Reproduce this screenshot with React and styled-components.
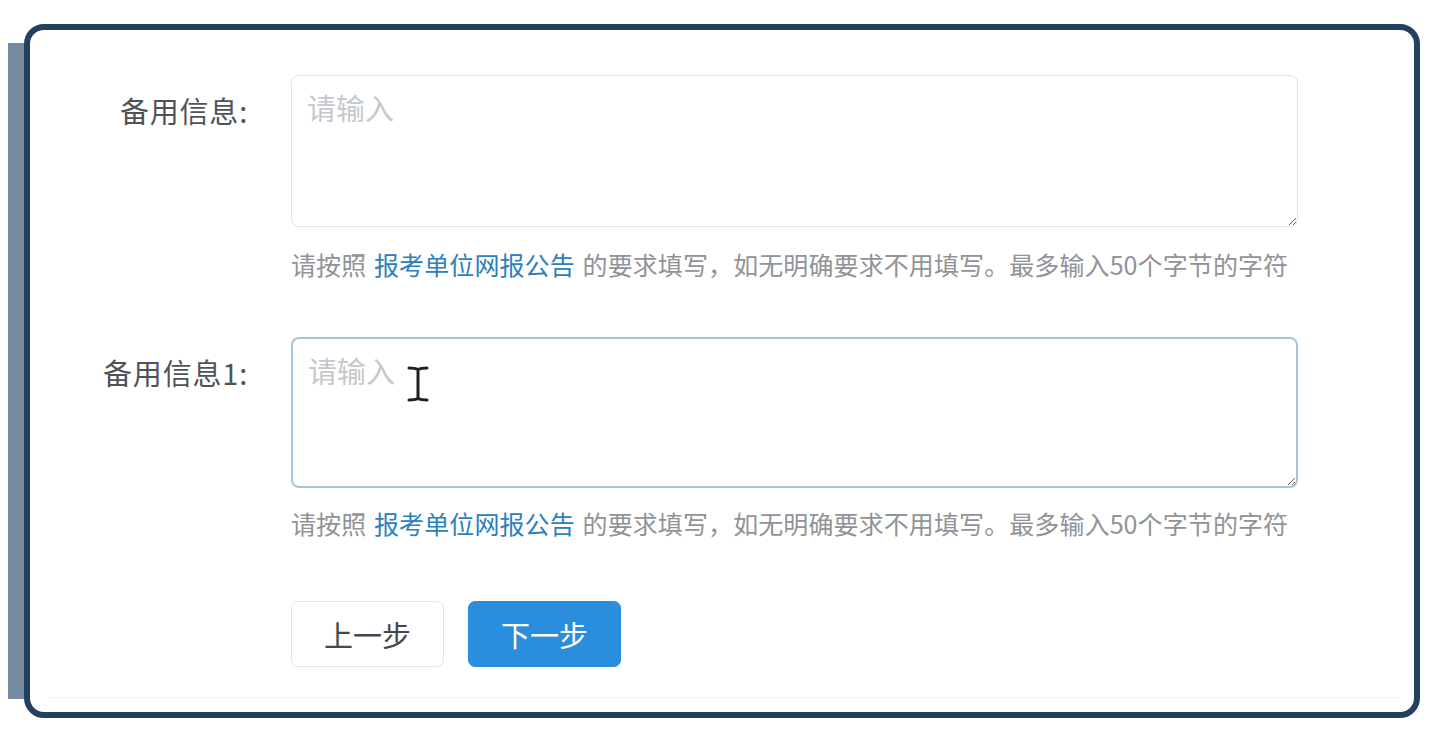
import React from 'react';
import styled, { createGlobalStyle } from 'styled-components';

const GlobalStyle = createGlobalStyle`
  html, body {
    margin: 0;
    padding: 0;
    background: #ffffff;
  }
  body {
    font-family: "Noto Sans CJK SC", "Noto Sans", sans-serif;
  }
`;

const Page = styled.div`
  position: relative;
  isolation: isolate;
  width: 1445px;
  height: 743px;
  box-sizing: border-box;
  padding: 24px 0 0 24px;
`;

const Frame = styled.div`
  position: relative;
  width: 1396px;
  height: 694px;
  box-sizing: border-box;
  border: 6px solid #24405f;
  border-radius: 20px;
  background: #ffffff;

  &::before {
    content: '';
    position: absolute;
    left: -22px;
    top: 13px;
    width: 20px;
    height: 656px;
    background: #768aa2;
    z-index: -1;
  }
`;

const Card = styled.div`
  box-sizing: border-box;
  height: 668px;
  padding-top: 45px;
  border-bottom: 1px solid #f2f2f2;
  margin: 0 14px 0 18px;
`;

const Form = styled.div`
  display: flex;
  flex-direction: column;
  gap: 54px;
  margin-left: -18px;
`;

const Row = styled.div`
  display: grid;
  grid-template-columns: 218px 1007px;
  column-gap: 43px;
`;

const Label = styled.label`
  text-align: right;
  padding-top: 15px;
  font-size: 29px;
  line-height: 40px;
  letter-spacing: 0.8px;
  color: #4f5358;
`;

const Field = styled.div`
  position: relative;
  display: flex;
  flex-direction: column;
`;

const TextArea = styled.textarea`
  display: block;
  box-sizing: border-box;
  width: 1007px;
  height: ${(p) => (p.$tall ? 152 : 151)}px;
  padding: 11px 15px;
  border: ${(p) => (p.$active ? '2px solid #a4c6e2' : '1.5px solid #e2e4e8')};
  border-radius: 8px;
  font-family: "Noto Sans CJK SC", "Noto Sans", sans-serif;
  font-size: 29px;
  line-height: 40px;
  color: #555;
  background: #fff;
  outline: none;
  resize: vertical;

  &::placeholder {
    color: #c5c8cd;
  }
`;

const Help = styled.div`
  margin-top: ${(p) => p.$gap}px;
  font-size: 25px;
  line-height: 37px;
  color: #909398;
  white-space: nowrap;
  word-spacing: 2px;
  letter-spacing: 0.1px;
`;

const Link = styled.a`
  color: #2b80bd;
  text-decoration: none;
`;

const Caret = styled.svg`
  position: absolute;
  left: 115px;
  top: 28px;
  pointer-events: none;
`;

const Actions = styled.div`
  display: flex;
  gap: 24px;
  margin-left: 243px;
  margin-top: 59px;
`;

const Button = styled.button`
  width: 153px;
  height: 66px;
  box-sizing: border-box;
  border-radius: 7px;
  font-family: "Noto Sans CJK SC", "Noto Sans", sans-serif;
  font-size: 29px;
  border: 1.5px solid ${(p) => (p.$primary ? '#2b8edc' : '#e4e6ea')};
  background: ${(p) => (p.$primary ? '#2b8edc' : '#ffffff')};
  color: ${(p) => (p.$primary ? '#ffffff' : '#44474c')};
  cursor: pointer;
`;

function HelpText({ gap }) {
  return (
    <Help $gap={gap}>
      请按照 <Link>报考单位网报公告</Link> 的要求填写，如无明确要求不用填写。最多输入50个字节的字符
    </Help>
  );
}

export default function App() {
  return (
    <>
      <GlobalStyle />
      <Page>
        <Frame>
          <Card>
            <Form>
              <Row>
                <Label>备用信息:</Label>
                <Field>
                  <TextArea $tall placeholder="请输入" />
                  <HelpText gap={19} />
                </Field>
              </Row>
              <Row>
                <Label>备用信息1:</Label>
                <Field>
                  <TextArea $active placeholder="请输入" />
                  <HelpText gap={17} />
                  <Caret width="24" height="38" viewBox="0 0 24 38">
                    <path
                      d="M3 3c3 0 6 0 9 1.5C15 3 18 3 21 3M12 4.5v29M3 35c3 0 6 0 9-1.5C15 35 18 35 21 35"
                      fill="none"
                      stroke="#1f1f1f"
                      strokeWidth="3"
                      strokeLinecap="round"
                      strokeLinejoin="round"
                    />
                  </Caret>
                </Field>
              </Row>
            </Form>
            <Actions>
              <Button>上一步</Button>
              <Button $primary>下一步</Button>
            </Actions>
          </Card>
        </Frame>
      </Page>
    </>
  );
}
